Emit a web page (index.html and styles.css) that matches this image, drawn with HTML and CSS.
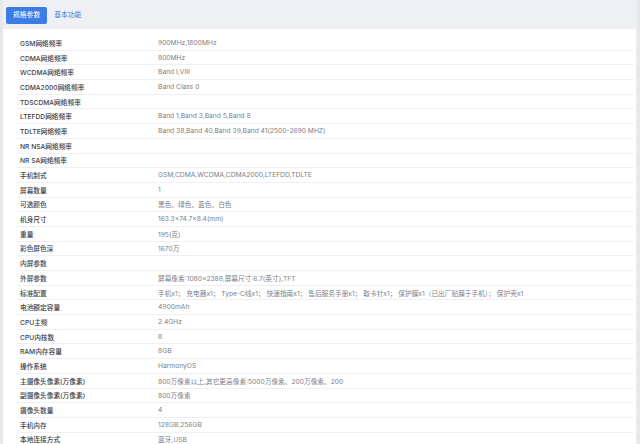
FILE: index.html
```html
<!DOCTYPE html>
<html lang="zh">
<head>
<meta charset="utf-8">
<link rel="stylesheet" href="styles.css">
</head>
<body>
<div class="page">
  <div class="tabs">
    <button class="tab tab-active">规格参数</button>
    <span class="tab">基本功能</span>
  </div>
  <div class="panel">
    <div class="table">
      <div class="row"><span class="label">GSM网络频率</span><span class="value">900MHz,1800MHz</span></div>
      <div class="row"><span class="label">CDMA网络频率</span><span class="value">800MHz</span></div>
      <div class="row"><span class="label">WCDMA网络频率</span><span class="value">Band I,VIII</span></div>
      <div class="row"><span class="label">CDMA2000网络频率</span><span class="value">Band Class 0</span></div>
      <div class="row"><span class="label">TDSCDMA网络频率</span><span class="value"></span></div>
      <div class="row"><span class="label">LTEFDD网络频率</span><span class="value">Band 1,Band 3,Band 5,Band 8</span></div>
      <div class="row"><span class="label">TDLTE网络频率</span><span class="value">Band 38,Band 40,Band 39,Band 41(2500-2690 MHZ)</span></div>
      <div class="row"><span class="label">NR NSA网络频率</span><span class="value"></span></div>
      <div class="row"><span class="label">NR SA网络频率</span><span class="value"></span></div>
      <div class="row"><span class="label">手机制式</span><span class="value">GSM,CDMA,WCDMA,CDMA2000,LTEFDD,TDLTE</span></div>
      <div class="row"><span class="label">屏幕数量</span><span class="value">1</span></div>
      <div class="row"><span class="label">可选颜色</span><span class="value">黑色、绿色、蓝色、白色</span></div>
      <div class="row"><span class="label">机身尺寸</span><span class="value">163.3×74.7×8.4(mm)</span></div>
      <div class="row"><span class="label">重量</span><span class="value">195(克)</span></div>
      <div class="row"><span class="label">彩色屏色深</span><span class="value">1670万</span></div>
      <div class="row"><span class="label">内屏参数</span><span class="value"></span></div>
      <div class="row"><span class="label">外屏参数</span><span class="value">屏幕像素:1080×2388,屏幕尺寸:6.7(英寸),TFT</span></div>
      <div class="row"><span class="label">标准配置</span><span class="value">手机x1； 充电器x1； Type-C线x1； 快速指南x1； 售后服务手册x1； 取卡针x1； 保护膜x1（已出厂贴膜于手机）； 保护壳x1</span></div>
      <div class="row"><span class="label">电池额定容量</span><span class="value">4900mAh</span></div>
      <div class="row"><span class="label">CPU主频</span><span class="value">2.4GHz</span></div>
      <div class="row"><span class="label">CPU内核数</span><span class="value">8</span></div>
      <div class="row"><span class="label">RAM内存容量</span><span class="value">8GB</span></div>
      <div class="row"><span class="label">操作系统</span><span class="value">HarmonyOS</span></div>
      <div class="row"><span class="label">主摄像头像素(万像素)</span><span class="value">800万像素以上,其它更高像素:5000万像素、200万像素、200</span></div>
      <div class="row"><span class="label">副摄像头像素(万像素)</span><span class="value">800万像素</span></div>
      <div class="row"><span class="label">摄像头数量</span><span class="value">4</span></div>
      <div class="row"><span class="label">手机内存</span><span class="value">128GB,256GB</span></div>
      <div class="row"><span class="label">本地连接方式</span><span class="value">蓝牙,USB</span></div>
    </div>
  </div>
</div>
</body>
</html>
```

FILE: styles.css
```css
html, body {
  margin: 0;
  padding: 0;
}
body {
  background: #e6e8ee;
  font-family: Inter, "Noto Sans CJK SC", sans-serif;
  overflow: hidden;
}
.page {
  margin: 0 3px 0 3px;
  height: 444px;
}
.tabs {
  height: 29px;
  background: #eff0f4;
  display: flex;
  align-items: center;
  gap: 7px;
  padding-left: 3px;
  box-sizing: border-box;
}
.tab {
  font-family: Inter, "Noto Sans CJK SC", sans-serif;
  font-size: 6.8px;
  color: #3d7fe6;
  line-height: 16px;
}
.tab-active {
  border: none;
  border-radius: 2px;
  background: #3b7de5;
  color: #ffffff;
  padding: 0 7px;
  height: 17px;
  margin-top: 1px;
}
.panel {
  background: #ffffff;
  height: 415px;
  padding: 7px 2px 0 14px;
  box-sizing: border-box;
  border-right: 1px solid #eceef2;
}
.table {
  display: flex;
  flex-direction: column;
}
.row {
  display: grid;
  grid-template-columns: 138px 1fr;
  height: 14.7px;
  box-sizing: border-box;
  padding-left: 3px;
  align-items: center;
  border-bottom: 1px solid #eff0f3;
  font-size: 6.7px;
  white-space: nowrap;
}
.label {
  color: #3e4248;
  font-weight: 500;
}
.value {
  color: #7d8087;
}
```
